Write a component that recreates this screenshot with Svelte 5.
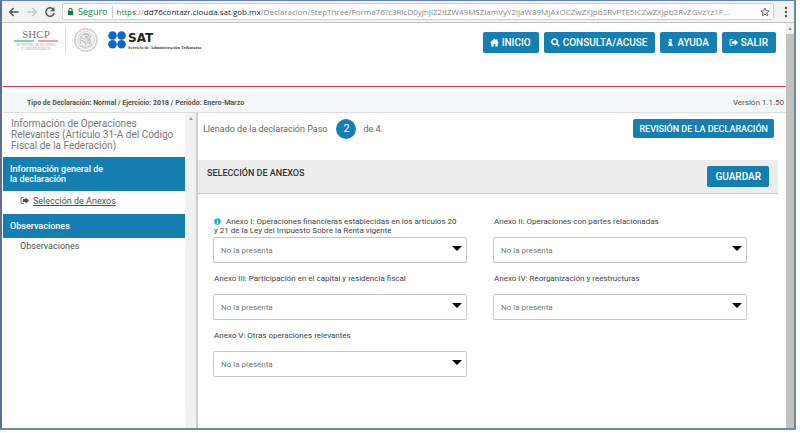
<script lang="ts">
	const navItems = [
		{ label: 'INICIO', icon: 'home' },
		{ label: 'CONSULTA/ACUSE', icon: 'search' },
		{ label: 'AYUDA', icon: 'info' },
		{ label: 'SALIR', icon: 'exit' }
	];

	const options = ['No la presenta', 'Sí la presenta'];

	let anexos = $state([
		{
			id: 'anexo-1',
			label: 'Anexo I: Operaciones financieras establecidas en los artículos 20 y 21 de la Ley del Impuesto Sobre la Renta vigente',
			info: true,
			value: options[0]
		},
		{ id: 'anexo-2', label: 'Anexo II: Operaciones con partes relacionadas', info: false, value: options[0] },
		{ id: 'anexo-3', label: 'Anexo III: Participación en el capital y residencia fiscal', info: false, value: options[0] },
		{ id: 'anexo-4', label: 'Anexo IV: Reorganización y reestructuras', info: false, value: options[0] },
		{ id: 'anexo-5', label: 'Anexo V: Otras operaciones relevantes', info: false, value: options[0] }
	]);
</script>

{#snippet icon(name: string)}
	<svg class="icon icon-{name}" viewBox="0 0 16 16" fill="currentColor" aria-hidden="true">
		{#if name === 'home'}
			<path d="M8 1 0 8.500h2.200V15H6.500v-4.500h3V15h4.300V8.500H16l-2.500-2.400V2.200h-2.200V4z" />
		{:else if name === 'search'}
			<path fill-rule="evenodd" d="M6.500.5a6.200 6.200 0 1 0 3.300 11.400l3.600 3.600 2.300-2.300-3.600-3.600A6.200 6.200 0 0 0 6.500.5zm0 2.700a3.500 3.500 0 1 1 0 7 3.500 3.500 0 0 1 0-7z" />
		{:else if name === 'info'}
			<path d="M5 0h6v4H5zM3 5.500h8v7h2V16H3v-3.500h2V9H3z" />
		{:else}
			<path d="M6.500 2H3.500A2.500 2.500 0 0 0 1 4.500v7A2.500 2.500 0 0 0 3.500 14h3v-1.500h-3a1 1 0 0 1-1-1v-7a1 1 0 0 1 1-1h3z" />
			<path d="M16 8 10 2v3.500H5v5h5V14z" />
		{/if}
	</svg>
{/snippet}

<div class="window">
	<div class="browser-bar">
		<button class="tool" aria-label="Atrás">
			<svg viewBox="0 0 12 12" fill="none" stroke="#555" stroke-width="1.4"><path d="M10.500 6H2M5.700 2 1.700 6l4 4" /></svg>
		</button>
		<button class="tool" aria-label="Adelante">
			<svg viewBox="0 0 12 12" fill="none" stroke="#c8c8c8" stroke-width="1.4"><path d="M1.500 6H10M6.300 2l4 4-4 4" /></svg>
		</button>
		<button class="tool" aria-label="Volver a cargar">
			<svg viewBox="0 0 12 12" fill="none" stroke="#555" stroke-width="1.500"><path d="M9.300 3.300A4.200 4.200 0 1 0 10.200 7" /><path d="M10.500 1v4.200H6.300z" fill="#555" stroke="none" /></svg>
		</button>
		<div class="address">
			<svg class="lock" viewBox="0 0 8 10" aria-hidden="true">
				<path d="M2.200 4.500V3a1.800 1.800 0 0 1 3.600 0v1.500" fill="none" stroke="#0b8043" stroke-width="1.200" />
				<path d="M1 4.200h6v5H1z" fill="#0b8043" />
			</svg>
			<span class="secure">Seguro</span>
			<span class="url"><span class="scheme">https</span>://<span class="host">dd76contazr.clouda.sat.gob.mx</span>/Declaracion/StepThree/Forma76?c3RlcD0yJnJlZ2ltZW49MSZlamVyY2ljaW89MjAxOCZwZXJpb2RvPTE5ICZwZXJpb2RvZGVzYz1F...</span>
			<svg class="star" viewBox="0 0 12 12" fill="none" stroke="#555" stroke-width="1.100" aria-hidden="true">
				<path d="M6 1.300l1.400 3.200 3.500.3-2.700 2.300.8 3.400L6 8.700l-3 1.800.8-3.400L1.100 4.800l3.500-.3z" />
			</svg>
		</div>
		<button class="menu" aria-label="Menú">
			<svg viewBox="0 0 4 12" fill="#555"><circle cx="2" cy="2" r="1.200" /><circle cx="2" cy="6" r="1.200" /><circle cx="2" cy="10" r="1.200" /></svg>
		</button>
	</div>

	<div class="viewport">
		<div class="page">
			<header>
				<div class="logos">
					<svg class="shcp" viewBox="0 0 46 22" role="img" aria-label="SHCP">
						<text x="22" y="9" text-anchor="middle" font-size="11" fill="#777">SHCP</text>
						<path d="M0 12h20" stroke="#4fc79a" stroke-width="1.500" />
						<path d="M24 12h20" stroke="#ef7f89" stroke-width="1.500" />
						<text x="22" y="17" text-anchor="middle" font-size="3" fill="#999">SECRETARÍA DE HACIENDA</text>
						<text x="22" y="21" text-anchor="middle" font-size="3" fill="#999">Y CRÉDITO PÚBLICO</text>
					</svg>
					<svg class="seal" viewBox="0 0 26 26" fill="none" stroke="#c4c4c4" aria-hidden="true">
						<circle cx="13" cy="13" r="11" stroke-width="2" stroke-dasharray="1 .5" />
						<circle cx="13" cy="13" r="8.500" stroke-width=".6" fill="#f1f1f1" />
						<path d="M8 17c-2-4-1-8 3-10 3-1 6 0 7 3l-2 1c-1-2-3-2-4-1 3 1 6 3 6 7M8 11c3 0 6 2 7 6M7 14c3-1 5 1 6 4M12 9l2 3 4 1M7 18c3 3 9 3 12-1" />
						<path d="M10 8c2-1 4-1 6 1M9 13l4 3M15 13l2 4" stroke="#aaa" stroke-width=".8" />
					</svg>
					<svg class="sat" viewBox="0 0 102 20" role="img" aria-label="SAT">
						<g fill="#1267c8">
							<circle cx="4.500" cy="5.500" r="4.300" /><circle cx="13.500" cy="5.500" r="4.300" />
							<circle cx="4.500" cy="14.200" r="4.300" /><circle cx="13.500" cy="14.200" r="4.300" />
						</g>
						<text class="sat-name" x="20" y="12" font-size="12">SAT</text>
						<text class="sat-sub" x="20" y="19" font-size="4.500">Servicio de Administración Tributaria</text>
					</svg>
				</div>
				<nav aria-label="Principal">
					{#each navItems as item}
						<button class="btn">{@render icon(item.icon)}{item.label}</button>
					{/each}
				</nav>
			</header>

			<div class="status">
				<span class="period">Tipo de Declaración: Normal / Ejercicio: 2018 / Periodo: Enero-Marzo</span>
				<span>Versión 1.1.50</span>
			</div>

			<div class="body">
				<aside>
					<div class="side-content">
						<h1>Información de Operaciones Relevantes (Artículo 31-A del Código Fiscal de la Federación)</h1>
						<h2><span>Información general de la declaración</span></h2>
						<a class="side-link current" href="#anexos">{@render icon('exit')}<span>Selección de Anexos</span></a>
						<h2>Observaciones</h2>
						<a class="side-link" href="#observaciones">Observaciones</a>
					</div>
					<div class="side-scroll" aria-hidden="true"><i class="up"></i></div>
				</aside>

				<main>
					<div class="step">
						<p>Llenado de la declaración Paso <span class="number">2</span> de 4.</p>
						<button class="btn review">REVISIÓN DE LA DECLARACIÓN</button>
					</div>

					<section id="anexos">
						<div class="section-head">
							<h3>SELECCIÓN DE ANEXOS</h3>
							<button class="btn">GUARDAR</button>
						</div>
						<form>
							{#each anexos as anexo}
								<div class="field">
									<label for={anexo.id}>
										{#if anexo.info}
											<svg class="hint" viewBox="0 0 8 8" aria-hidden="true">
												<circle cx="4" cy="4" r="3.700" fill="#2fa4cf" />
												<path d="M3.400 1.500h1.200v1H3.400zM3 3.300h1.600v2.400H5v.8H3v-.8h.4V4H3z" fill="#fff" />
											</svg>
										{/if}
										{anexo.label}
									</label>
									<div class="select">
										<select id={anexo.id} bind:value={anexo.value}>
											{#each options as option}
												<option>{option}</option>
											{/each}
										</select>
									</div>
								</div>
							{/each}
						</form>
					</section>
				</main>
			</div>
		</div>
		<div class="page-scroll" aria-hidden="true"><i class="up"></i><div class="thumb"></div></div>
	</div>
</div>

<style>
	:global(body) {
		background: #fff;
		padding: 0 4px 3px 0;
	}

	.window, .window * {
		box-sizing: border-box;
	}

	.window {
		display: flex;
		flex-direction: column;
		min-height: calc(100vh - 3px);
		border: 2px solid #7186a5;
		border-top: 1px solid #6680b8;
		border-left: 2px solid #5f6f8c;
		background: #fff;
		color: #555;
		font-family: Roboto, "Liberation Sans", sans-serif;
		font-size: 8px;
	}

	button, select {
		font-family: inherit;
	}

	h1, h2, h3, p {
		margin: 0;
	}

	/* Browser toolbar */
	.browser-bar {
		display: flex;
		align-items: center;
		gap: 6px;
		height: 22px;
		padding: 0 6px;
		background: #f2f2f2;
		border-bottom: 1px solid #c4c4c4;
	}

	.tool, .menu {
		display: flex;
		padding: 0;
		border: 0;
		background: none;
	}

	.tool svg {
		width: 12px;
		height: 12px;
	}

	.menu svg {
		width: 4px;
		height: 12px;
	}

	.menu {
		margin-left: 4px;
	}

	.address {
		display: flex;
		flex: 1;
		align-items: center;
		min-width: 0;
		height: 17px;
		padding: 0 3px 0 4px;
		border: 1px solid #cfcfcf;
		border-radius: 2px;
		background: #fff;
		font-family: "Open Sans", "Noto Sans", sans-serif;
		font-size: 8px;
	}

	.lock {
		width: 7px;
		height: 9px;
		margin-right: 4px;
	}

	.secure {
		padding-right: 4px;
		margin-right: 4px;
		border-right: 1px solid #ccc;
		color: #0b8043;
		font-size: 9px;
		line-height: 12px;
	}

	.url {
		flex: 1;
		overflow: hidden;
		color: #888;
		white-space: nowrap;
	}

	.scheme {
		color: #0b8043;
	}

	.host {
		color: #222;
	}

	.star {
		flex-shrink: 0;
		width: 10px;
		height: 10px;
	}

	/* Page */
	.viewport {
		display: flex;
		flex: 1;
	}

	.page {
		display: flex;
		flex: 1;
		flex-direction: column;
		min-width: 0;
		padding-left: 1px;
	}

	header {
		display: flex;
		align-items: flex-start;
		justify-content: space-between;
		height: 64px;
		padding: 4px 10px 0 11px;
		border-bottom: 1px solid #cf3c3c;
	}

	.logos {
		display: flex;
		align-items: center;
	}

	.shcp {
		width: 46px;
		height: 22px;
		font-family: "Liberation Serif", serif;
	}

	.seal {
		width: 34px;
		height: 26px;
		padding-left: 7px;
		margin-left: 5px;
		border-left: 1px solid #ddd;
	}

	.sat {
		width: 102px;
		height: 20px;
		margin-left: 9px;
	}

	.sat-name {
		font-family: "DejaVu Sans", sans-serif;
		font-weight: bold;
		fill: #222;
	}

	.sat-sub {
		font-family: "Liberation Serif", serif;
		font-weight: bold;
		fill: #444;
	}

	nav {
		display: flex;
		gap: 5px;
		padding-top: 5px;
	}

	.btn {
		display: flex;
		align-items: center;
		gap: 3px;
		height: 21px;
		padding: 0 8px;
		border: 0;
		border-radius: 2px;
		background: #157fb2;
		color: #fff;
		font-size: 10px;
		font-weight: 500;
		white-space: nowrap;
	}

	nav .btn {
		padding: 0 8px 0 7px;
	}

	.icon {
		width: 9px;
		height: 9px;
		flex-shrink: 0;
	}

	.icon-info {
		width: 7px;
	}

	.status {
		display: flex;
		align-items: center;
		justify-content: space-between;
		height: 20px;
		margin-top: 6px;
		padding: 0 2px 0 24px;
		border-bottom: 1px solid #ddd;
		background: #f3f7f7;
	}

	.period {
		font-size: 7px;
		font-weight: 700;
	}

	.body {
		display: flex;
		flex: 1;
	}

	aside {
		display: flex;
		flex: 0 0 195px;
		border-right: 2px solid #ccc;
	}

	.side-content {
		flex: 1;
	}

	h1 {
		padding: 5px 8px 6px;
		color: #777;
		font-size: 10px;
		font-weight: 400;
		line-height: 11px;
	}

	h2 {
		padding: 7px 7px;
		background: #157fb2;
		color: #fff;
		font-size: 9px;
		font-weight: 500;
		line-height: 10px;
	}

	h2 span {
		display: block;
		max-width: 100px;
	}

	.side-link {
		display: flex;
		align-items: center;
		gap: 4px;
		height: 23px;
		padding: 0 17px 4px;
		color: #4a5548;
		font-size: 9px;
		text-decoration: none;
	}

	.side-link span {
		text-decoration: underline;
	}

	.side-link:not(.current) {
		height: 20px;
	}

	.side-scroll, .page-scroll {
		display: flex;
		flex-direction: column;
		align-items: center;
		width: 11px;
		background: #f1f1f1;
	}

	.page-scroll {
		width: 8px;
	}

	.up {
		margin: 4px 0;
		border: 2px solid transparent;
		border-top: 0;
		border-bottom: 3px solid #999;
	}

	.thumb {
		flex: 1;
		width: 100%;
		background: #c1c1c1;
	}

	main {
		flex: 1;
		padding-right: 8px;
	}

	.step {
		display: flex;
		align-items: center;
		justify-content: space-between;
		height: 47px;
		padding: 0 4px 16px 5px;
	}

	.step p {
		display: flex;
		align-items: center;
		color: #666;
		font-size: 9px;
	}

	.number {
		display: flex;
		align-items: center;
		justify-content: center;
		width: 20px;
		height: 20px;
		margin: 0 7px 0 9px;
		border-radius: 50%;
		background: #157fb2;
		color: #fff;
		font-size: 11px;
	}

	.review {
		height: 19px;
		padding: 0 6px;
		font-size: 9px;
	}

	.section-head {
		display: flex;
		align-items: center;
		justify-content: space-between;
		height: 34px;
		padding: 0 9px;
		border-bottom: 1px solid #ccc;
		background: #ededed;
	}

	h3 {
		padding-bottom: 8px;
		color: #333;
		font-size: 9px;
		font-weight: 500;
	}

	form {
		display: grid;
		grid-template-columns: 1fr 1fr;
		gap: 7px 26px;
		padding: 19px 31px 0 15px;
	}

	.field {
		display: flex;
		flex-direction: column;
	}

	label {
		height: 24px;
		padding: 4px 8px 0 1px;
		color: #444;
		font-size: 8px;
		line-height: 9px;
	}

	.hint {
		width: 7px;
		height: 7px;
		margin-right: 3px;
		vertical-align: -1px;
	}

	.select {
		position: relative;
	}

	.select::after {
		position: absolute;
		top: 9px;
		right: 5px;
		border: 5px solid transparent;
		border-top-color: #000;
		border-bottom: 0;
		content: "";
		pointer-events: none;
	}

	select {
		display: block;
		width: 100%;
		height: 26px;
		padding: 0 7px;
		border: 1px solid #c8c8c8;
		border-radius: 2px;
		appearance: none;
		background: #fff;
		color: #777;
		font-size: 8px;
	}
</style>
